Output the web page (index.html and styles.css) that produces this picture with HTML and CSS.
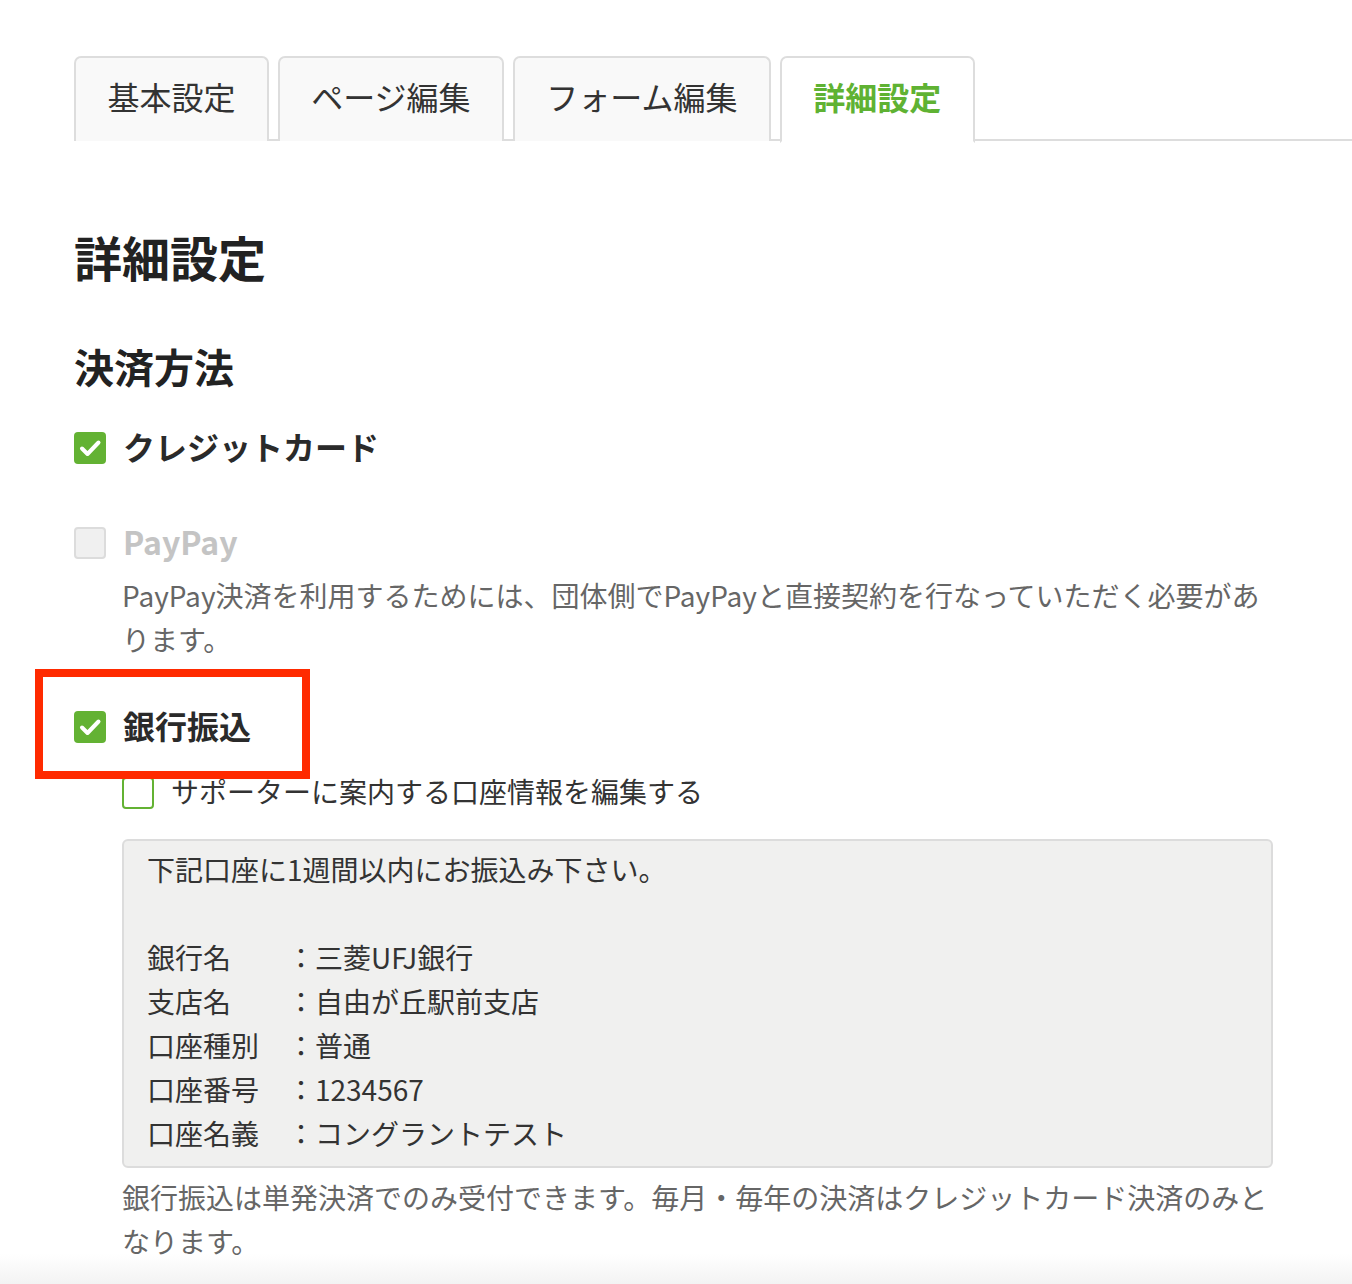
FILE: index.html
```html
<!DOCTYPE html>
<html lang="ja">
<head>
<meta charset="utf-8">
<link rel="stylesheet" href="styles.css">
</head>
<body>
<div class="page">
  <div class="tabs">
    <div class="tab">基本設定</div>
    <div class="tab">ページ編集</div>
    <div class="tab">フォーム編集</div>
    <div class="tab active">詳細設定</div>
  </div>

  <div class="content">
    <h1 class="title">詳細設定</h1>
    <h2 class="subtitle">決済方法</h2>

    <div class="option option-card">
      <span class="cb checked"><svg viewBox="0 0 32 32" width="32" height="32"><path d="M8 16.5 L13.5 22 L24.5 10.5" fill="none" stroke="#fff" stroke-width="4" stroke-linecap="round" stroke-linejoin="round"/></svg></span>
      <span class="label">クレジットカード</span>
    </div>

    <div class="option option-paypay">
      <span class="cb disabled"></span>
      <span class="label label-disabled">PayPay</span>
    </div>
    <p class="note note-paypay">PayPay決済を利用するためには、団体側でPayPayと直接契約を行なっていただく必要があります。</p>

    <div class="option option-bank">
      <span class="cb checked"><svg viewBox="0 0 32 32" width="32" height="32"><path d="M8 16.5 L13.5 22 L24.5 10.5" fill="none" stroke="#fff" stroke-width="4" stroke-linecap="round" stroke-linejoin="round"/></svg></span>
      <span class="label">銀行振込</span>
      <div class="highlight"></div>
    </div>

    <div class="sub">
      <div class="sub-option">
        <span class="cb outline"></span>
        <span class="sub-label">サポーターに案内する口座情報を編集する</span>
      </div>
      <div class="bankbox">下記口座に1週間以内にお振込み下さい。

銀行名　　：三菱UFJ銀行
支店名　　：自由が丘駅前支店
口座種別　：普通
口座番号　：1234567
口座名義　：コングラントテスト</div>
      <p class="note note-bank">銀行振込は単発決済でのみ受付できます。毎月・毎年の決済はクレジットカード決済のみとなります。</p>
    </div>
  </div>
</div>
<div class="fade"></div>
</body>
</html>
```

FILE: styles.css
```css
* { box-sizing: border-box; }
html, body {
  margin: 0;
  padding: 0;
  background: #fff;
}
body {
  font-family: "Noto Sans CJK JP", "Noto Sans", sans-serif;
  color: #333;
  min-height: 1284px;
}
.page {
  padding: 56px 0 0 74px;
}
.tabs {
  display: flex;
  gap: 9px;
  border-bottom: 2px solid #ddd;
  height: 85px;
}
.tab {
  height: 85px;
  padding: 0 31.4px;
  border: 2px solid #ddd;
  border-bottom: none;
  border-radius: 7px 7px 0 0;
  background: #f9f9f9;
  font-size: 32px;
  line-height: 77px;
  color: #333;
  white-space: nowrap;
}
.tab.active {
  background: #fff;
  color: #5fb233;
  font-weight: bold;
  height: 87px;
  border-bottom: 2px solid #fff;
}
.content {
  width: 1200px;
}
.title {
  margin: 79px 0 0;
  font-size: 48px;
  line-height: 72px;
  font-weight: bold;
  color: #222;
}
.subtitle {
  margin: 44px 0 0;
  font-size: 40px;
  line-height: 60px;
  font-weight: bold;
  color: #222;
}
.option {
  display: flex;
  align-items: center;
  height: 48px;
  gap: 17px;
  position: relative;
}
.option-card { margin-top: 28px; }
.option-paypay { margin-top: 47px; }
.option-bank { margin-top: 42px; }
.cb {
  width: 32px;
  height: 32px;
  border-radius: 4px;
  flex: none;
  display: block;
}
.cb svg { display: block; }
.cb.checked { background: #63b233; }
.cb.disabled {
  background: #f0f0f0;
  border: 2px solid #dcdcdc;
}
.cb.outline {
  background: #fff;
  border: 2px solid #63b233;
}
.label {
  font-size: 32px;
  font-weight: bold;
  color: #2a2a2a;
  line-height: 48px;
  margin-top: -4px;
}
.label-disabled {
  color: #c4c4c4;
}
.note {
  margin: 0;
  font-size: 28px;
  line-height: 44px;
  color: #666;
}
.note-paypay {
  margin: 6px 0 0 48px;
  width: 1152px;
}
.highlight {
  position: absolute;
  left: -39px;
  top: -34px;
  width: 275px;
  height: 110px;
  border: 8px solid #ff2a00;
  pointer-events: none;
}
.sub {
  margin-left: 48px;
  width: 1152px;
}
.sub-option {
  display: flex;
  align-items: center;
  gap: 17px;
  height: 48px;
  margin-top: 17px;
}
.sub-option .cb {
  margin-top: 2px;
}
.sub-label {
  font-size: 28px;
  line-height: 48px;
  color: #333;
  margin-top: -2px;
}
.bankbox {
  margin-top: 23px;
  background: #f0f0ef;
  border: 2px solid #dcdcdc;
  border-radius: 6px;
  padding: 6px 24px 11px 23px;
  font-size: 28px;
  line-height: 44px;
  color: #333;
  white-space: pre-wrap;
  width: 1151px;
}
.note-bank {
  margin-top: 7px;
}
.fade {
  position: absolute;
  left: 0;
  right: 0;
  top: 1254px;
  height: 30px;
  background: linear-gradient(rgba(245,245,245,0), #f3f3f3);
  pointer-events: none;
}
```
